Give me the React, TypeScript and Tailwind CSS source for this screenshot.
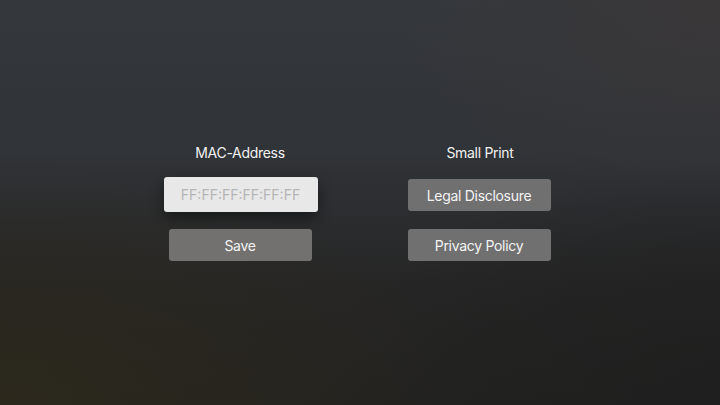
export default function App() {
  return (
    <div
      className="relative h-[405px] w-[720px] overflow-hidden bg-[#2a2b2c] bg-[radial-gradient(ellipse_65%_60%_at_0%_100%,#2c281c_0%,rgba(44,40,28,0)_100%),radial-gradient(ellipse_55%_60%_at_100%_100%,#1f1f1f_0%,rgba(31,31,31,0)_100%),radial-gradient(ellipse_45%_50%_at_100%_0%,#3a3738_0%,rgba(58,55,56,0)_100%),linear-gradient(to_bottom,#34383d_0%,#303337_38%,#262626_70%,#222220_100%)]"
      style={{ fontFamily: 'Inter, "Noto Sans", sans-serif' }}
    >
      <div className="flex justify-center gap-[80px] pt-[143px] tracking-[-0.3px]">
        {/* MAC column */}
        <div className="flex w-[160px] flex-col items-center">
          <h2 className="h-5 text-[14px] leading-5 font-normal text-[#f2f2f2]">MAC-Address</h2>
          <input
            readOnly
            placeholder="FF:FF:FF:FF:FF:FF"
            className="mt-[14px] ml-[1px] h-[35px] w-[154px] rounded-[3px] bg-[#e8e8e8] text-center text-[14px] tracking-normal text-[#3a3a3a] shadow-[0_6px_14px_rgba(0,0,0,0.45)] outline-none placeholder:text-[#b5b5b5]"
          />
          <button className="mt-[17px] h-8 w-[143px] rounded-[3px] bg-[#727170] text-[14px] text-[#f4f4f4]">
            Save
          </button>
        </div>

        {/* Small print column */}
        <div className="flex w-[160px] flex-col items-center">
          <h2 className="h-5 text-[14px] leading-5 font-normal text-[#f2f2f2]">Small Print</h2>
          <button className="mt-[16px] mr-[2px] h-8 w-[143px] rounded-[3px] bg-[#707070] text-[14px] text-[#f4f4f4]">
            Legal Disclosure
          </button>
          <button className="mt-[18px] mr-[2px] h-8 w-[143px] rounded-[3px] bg-[#707070] text-[14px] text-[#f4f4f4]">
            Privacy Policy
          </button>
        </div>
      </div>
    </div>
  );
}
